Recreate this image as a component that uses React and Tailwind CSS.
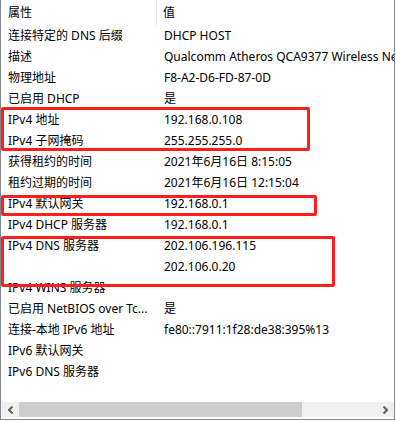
import React from 'react'

const rows = [
  ['连接特定的 DNS 后缀', 'DHCP HOST'],
  ['描述', 'Qualcomm Atheros QCA9377 Wireless Network Adapter'],
  ['物理地址', 'F8-A2-D6-FD-87-0D'],
  ['已启用 DHCP', '是'],
  ['IPv4 地址', '192.168.0.108'],
  ['IPv4 子网掩码', '255.255.255.0'],
  ['获得租约的时间', '2021年6月16日 8:15:05'],
  ['租约过期的时间', '2021年6月16日 12:15:04'],
  ['IPv4 默认网关', '192.168.0.1'],
  ['IPv4 DHCP 服务器', '192.168.0.1'],
  ['IPv4 DNS 服务器', '202.106.196.115'],
  ['', '202.106.0.20'],
  ['IPv4 WINS 服务器', ''],
  ['已启用 NetBIOS over Tc...', '是'],
  ['连接-本地 IPv6 地址', 'fe80::7911:1f28:de38:395%13'],
  ['IPv6 默认网关', ''],
  ['IPv6 DNS 服务器', ''],
]

const App = () => {
  return (
    <div
      className="relative w-[396px] h-[421px] bg-white text-black text-[12px]"
      style={{ fontFamily: "'Noto Sans', 'Noto Sans CJK SC', sans-serif" }}
    >
      <div className="w-[395px] h-[420px] border-l border-r border-b border-[#828790] flex flex-col overflow-hidden">
        {/* header */}
        <div className="flex h-[25px] shrink-0">
          <div className="w-[156px] pl-[7px] leading-[25px] border-r border-[#e5e5e5]">属性</div>
          <div className="pl-[6px] leading-[25px]">值</div>
        </div>

        {rows.map((r, i) => (
          <div key={i} className="flex h-[21px] shrink-0 leading-[21px] whitespace-nowrap">
            <div className="w-[157px] pl-[7px] overflow-hidden">{r[0]}</div>
            <div className="flex-1 pl-[6px] overflow-hidden">{r[1]}</div>
          </div>
        ))}

        <div className="flex-1" />

        {/* horizontal scrollbar */}
        <div className="flex h-[15px] mb-[2px] bg-[#f0f0f0] shrink-0">
          <div className="w-[18px] flex items-center justify-center">
            <svg width="7" height="8" viewBox="0 0 7 8">
              <path d="M5.5 0.5 L2 4 L5.5 7.5" stroke="#606060" strokeWidth="2" fill="none" />
            </svg>
          </div>
          <div className="w-[283px] bg-[#cdcdcd]" />
          <div className="flex-1" />
          <div className="w-[17px] flex items-center justify-center">
            <svg width="7" height="8" viewBox="0 0 7 8">
              <path d="M1.5 0.5 L5 4 L1.5 7.5" stroke="#606060" strokeWidth="2" fill="none" />
            </svg>
          </div>
        </div>
      </div>

      {/* red highlight boxes */}
      <div className="absolute left-[1px] top-[107px] w-[309px] h-[44px] border-[3px] border-[#ff1e1e] rounded-[2px]" />
      <div className="absolute left-[1px] top-[195px] w-[316px] h-[21px] border-[3px] border-[#ff1e1e] rounded-[2px]" />
      <div className="absolute left-[1px] top-[236px] w-[334px] h-[51px] border-[3px] border-[#ff1e1e] rounded-[2px]" />
    </div>
  )
}

export default App
